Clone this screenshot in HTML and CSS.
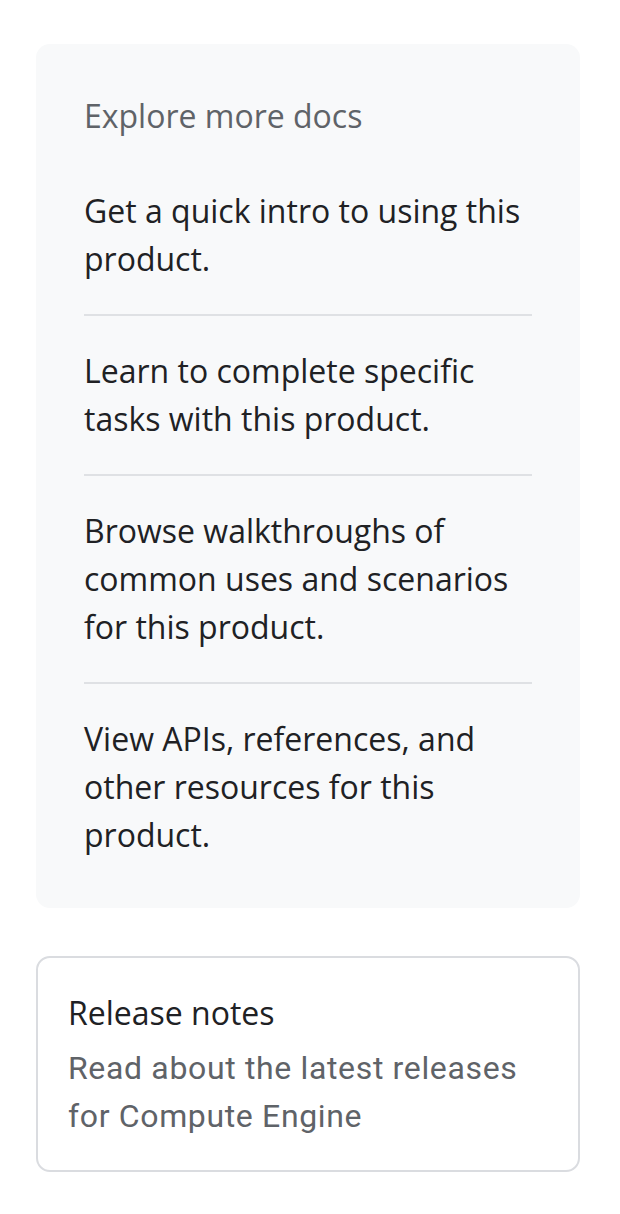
FILE: index.html
```html
<!DOCTYPE html>
<html lang="en">
<head>
<meta charset="utf-8">
<link rel="stylesheet" href="styles.css">
</head>
<body>
<div class="page">
  <section class="explore">
    <h2 class="explore-title">Explore more docs</h2>
    <ul class="explore-list">
      <li class="explore-item">Get a quick intro to using this product.</li>
      <li class="explore-item">Learn to complete specific tasks with this product.</li>
      <li class="explore-item">Browse walkthroughs of common uses and scenarios for this product.</li>
      <li class="explore-item">View APIs, references, and other resources for this product.</li>
    </ul>
  </section>
  <section class="card">
    <h3 class="card-title">Release notes</h3>
    <p class="card-desc">Read about the latest releases for Compute Engine</p>
  </section>
</div>
</body>
</html>
```

FILE: styles.css
```css
html, body {
  margin: 0;
  padding: 0;
  background: #ffffff;
}
.page {
  padding: 44px 40px 0 36px;
  display: flex;
  flex-direction: column;
  gap: 48px;
  width: 544px;
}
.explore {
  background: #f8f9fa;
  border-radius: 14px;
  padding: 48px 48px 49px 48px;
}
.explore-title {
  margin: 0 0 47px 0;
  font-family: "Open Sans", "Noto Sans", sans-serif;
  font-weight: 400;
  font-size: 32px;
  line-height: 48px;
  color: #5f6368;
}
.explore-list {
  list-style: none;
  margin: 0;
  padding: 0;
}
.explore-item {
  font-family: "Open Sans", "Noto Sans", sans-serif;
  font-size: 32px;
  line-height: 48px;
  color: #202124;
  padding: 31px 0 31px 0;
  border-top: 2px solid #dfe1e4;
}
.explore-item:first-child {
  border-top: none;
  padding-top: 0;
}
.explore-item:last-child {
  padding-bottom: 0;
}
.card {
  border: 2px solid #dadce0;
  border-radius: 14px;
  padding: 31px 32px 30px 30px;
}
.card-title {
  margin: 0 0 7px 0;
  font-family: "Open Sans", "Noto Sans", sans-serif;
  font-weight: 500;
  font-size: 32px;
  line-height: 48px;
  color: #202124;
}
.card-desc {
  margin: 0;
  font-family: Roboto, "Liberation Sans", sans-serif;
  font-size: 32px;
  letter-spacing: 0.65px;
  line-height: 48px;
  color: #5f6368;
}
```
